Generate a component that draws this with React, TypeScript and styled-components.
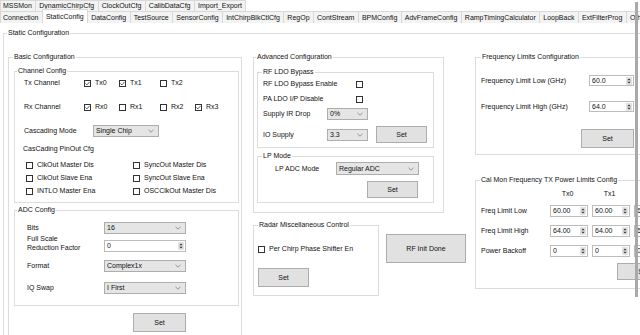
import React from "react";
import styled, { createGlobalStyle } from "styled-components";

const GlobalStyle = createGlobalStyle`
  html, body { margin: 0; padding: 0; background: #fff; }
  *, *::before, *::after { box-sizing: border-box; }
`;

const Screen = styled.div`
  position: relative;
  width: 640px;
  height: 335px;
  overflow: hidden;
  background: #fff;
  font-family: "Liberation Sans", Arial, sans-serif;
  font-size: 7px;
  line-height: 8px;
  color: #111;
`;

const TabStrip = styled.div`
  display: flex;
  flex-direction: column;
`;

const TabRow = styled.div<{ $h: number; $base?: boolean }>`
  display: flex;
  height: ${(p) => p.$h}px;
  white-space: nowrap;
  ${(p) => (p.$base ? "box-shadow: inset 0 -1px 0 #d9d9d9;" : "")}
`;

const Tab = styled.div<{ $sel?: boolean; $first?: boolean }>`
  flex: none;
  display: flex;
  align-items: center;
  padding: 0 3.5px 0 ${(p) => (p.$first ? 2 : 3)}px;
  margin-left: ${(p) => (p.$first ? 0 : -1)}px;
  border: 1px solid #d9d9d9;
  border-bottom: none;
  background: ${(p) => (p.$sel ? "#fff" : "#f3f3f3")};
  ${(p) =>
    p.$sel
      ? "margin-top: -2px; height: calc(100% + 2px); position: relative; z-index: 1;"
      : ""}
`;

const TabPage = styled.div`
  padding: 6px 0 0 3px;
`;

const GroupBox = styled.fieldset<{ $w: number; $h: number; $mt?: number; $mr?: number }>`
  flex: none;
  width: ${(p) => p.$w}px;
  height: ${(p) => p.$h}px;
  margin: ${(p) => p.$mt ?? 0}px ${(p) => p.$mr ?? 0}px 0 0;
  padding: 0;
  min-width: 0;
  border: 1px solid #dcdcdc;
`;

const Legend = styled.legend<{ $x: number }>`
  margin-left: ${(p) => p.$x}px;
  padding: 0 1px;
  font-size: 7px;
  line-height: 8px;
  white-space: nowrap;
`;

const GroupBody = styled.div<{ $pad: string; $row?: boolean }>`
  display: flex;
  flex-direction: ${(p) => (p.$row ? "row" : "column")};
  align-items: flex-start;
  padding: ${(p) => p.$pad};
`;

const Column = styled.div<{ $w: number; $mr?: number }>`
  flex: none;
  display: flex;
  flex-direction: column;
  align-items: flex-start;
  width: ${(p) => p.$w}px;
  margin-right: ${(p) => p.$mr ?? 0}px;
`;

const PairRow = styled.div<{ $mt?: number }>`
  display: flex;
  align-items: flex-start;
  margin-top: ${(p) => p.$mt ?? 0}px;
`;

const FormRow = styled.div<{ $h: number; $mt?: number; $ml?: number; $end?: boolean }>`
  flex: none;
  display: flex;
  align-items: ${(p) => (p.$end ? "flex-end" : "center")};
  height: ${(p) => p.$h}px;
  margin-top: ${(p) => p.$mt ?? 0}px;
  margin-left: ${(p) => p.$ml ?? 0}px;
  white-space: nowrap;
`;

const FieldLabel = styled.span<{ $w?: number; $lh?: number }>`
  flex: none;
  width: ${(p) => (p.$w ? `${p.$w}px` : "auto")};
  line-height: ${(p) => p.$lh ?? 8}px;
  white-space: nowrap;
`;

const CheckGrid = styled.div<{ $cols: string; $mt?: number; $ml?: number }>`
  display: grid;
  grid-template-columns: ${(p) => p.$cols};
  align-items: center;
  height: 10px;
  margin-top: ${(p) => p.$mt ?? 0}px;
  margin-left: ${(p) => p.$ml ?? 0}px;
  white-space: nowrap;
`;

const CheckItem = styled.span`
  display: flex;
  align-items: center;
  gap: 4px;
`;

const BoxMark = styled.span`
  flex: none;
  width: 7px;
  height: 7px;
  border: 1px solid #333;
  background: #fff;
  display: flex;
  align-items: center;
  justify-content: center;
`;

const Combo = styled.div<{ $w: number; $h: number; $ml?: number }>`
  flex: none;
  display: flex;
  align-items: center;
  justify-content: space-between;
  width: ${(p) => p.$w}px;
  height: ${(p) => p.$h}px;
  margin-left: ${(p) => p.$ml ?? 0}px;
  padding: 0 4px 0 2px;
  background: #e5e5e5;
  border: 1px solid #adadad;
`;

const SpinBox = styled.div<{ $w: number; $h: number }>`
  flex: none;
  display: flex;
  align-items: center;
  justify-content: space-between;
  width: ${(p) => p.$w}px;
  height: ${(p) => p.$h}px;
  padding: 0 1px 0 2px;
  background: #fff;
  border: 1px solid #bcbcbc;
`;

const PushButton = styled.button<{ $w: number; $h: number; $mt?: number; $ml?: number }>`
  flex: none;
  display: flex;
  align-items: center;
  justify-content: center;
  width: ${(p) => p.$w}px;
  height: ${(p) => p.$h}px;
  margin: ${(p) => p.$mt ?? 0}px 0 0 ${(p) => p.$ml ?? 0}px;
  padding: 0;
  font: inherit;
  color: #111;
  background: #e1e1e1;
  border: 1px solid #adadad;
  border-radius: 0;
`;

const LimitGrid = styled.div`
  display: grid;
  grid-template-columns: 65px 38px 38px 38px;
  grid-auto-rows: 12px;
  grid-template-rows: 7px;
  column-gap: 4px;
  row-gap: 8px;
  align-items: center;
  white-space: nowrap;
`;

const ColHead = styled.span`
  text-align: center;
  padding-right: 3px;
`;

const ScrollEdge = styled.div`
  position: absolute;
  left: 635px;
  top: 2px;
  width: 3px;
  height: 295px;
  background: #a9a9a9;
`;

function Check({ on }: { on?: boolean }) {
  return (
    <BoxMark>
      {on && (
        <svg width="5" height="5" viewBox="0 0 5 5">
          <polyline points="0.4,2.4 1.9,3.9 4.6,0.9" fill="none" stroke="#333" strokeWidth="0.8" />
        </svg>
      )}
    </BoxMark>
  );
}

function CheckOpt({ on, label }: { on?: boolean; label: string }) {
  return (
    <CheckItem>
      <Check on={on} />
      <span>{label}</span>
    </CheckItem>
  );
}

function Drop({ w, h, value, ml }: { w: number; h: number; value: string; ml?: number }) {
  return (
    <Combo $w={w} $h={h} $ml={ml}>
      <span>{value}</span>
      <svg width="6" height="4" viewBox="0 0 6 4">
        <polyline points="0.5,0.8 3,3.2 5.5,0.8" fill="none" stroke="#7d7d7d" strokeWidth="0.8" />
      </svg>
    </Combo>
  );
}

function Spin({ w, h, value }: { w: number; h: number; value: string }) {
  return (
    <SpinBox $w={w} $h={h}>
      <span>{value}</span>
      <svg width="6" height="8" viewBox="0 0 6 8">
        <rect x="0" y="0" width="6" height="8" fill="#e2e2e2" />
        <polygon points="1.3,3.2 3,1.5 4.7,3.2" fill="#333" />
        <polygon points="1.3,4.8 3,6.5 4.7,4.8" fill="#333" />
      </svg>
    </SpinBox>
  );
}

const row1 = ["MSSMon", "DynamicChirpCfg", "ClockOutCfg", "CalibDataCfg", "Import_Export"];
const row2 = [
  "Connection",
  "StaticConfig",
  "DataConfig",
  "TestSource",
  "SensorConfig",
  "IntChirpBlkCtlCfg",
  "RegOp",
  "ContStream",
  "BPMConfig",
  "AdvFrameConfig",
  "RampTimingCalculator",
  "LoopBack",
  "ExtFilterProg",
  "OtherCfg",
];

const limitRows = [
  { label: "Freq Limit Low", values: ["60.00", "60.00", "60.00"] },
  { label: "Freq Limit High", values: ["64.00", "64.00", "64.00"] },
  { label: "Power Backoff", values: ["0", "0", "0"] },
];

export default function App() {
  return (
    <Screen>
      <GlobalStyle />
      <TabStrip>
        <TabRow $h={11}>
          {row1.map((t, i) => (
            <Tab key={t} $first={i === 0}>
              {t}
            </Tab>
          ))}
        </TabRow>
        <TabRow $h={12} $base>
          {row2.map((t, i) => (
            <Tab key={t} $first={i === 0} $sel={t === "StaticConfig"}>
              {t}
            </Tab>
          ))}
        </TabRow>
      </TabStrip>

      <TabPage>
        <GroupBox $w={720} $h={330}>
          <Legend $x={3}>Static Configuration</Legend>
          <GroupBody $pad="16px 0 0 4px" $row>
            {/* Basic configuration */}
            <GroupBox $w={234} $h={290} $mr={11}>
              <Legend $x={4}>Basic Configuration</Legend>
              <GroupBody $pad="6px 0 0 5px">
                <GroupBox $w={225} $h={136}>
                  <Legend $x={2}>Channel Config</Legend>
                  <GroupBody $pad="3px 0 0 9px">
                    <CheckGrid $cols="60px 35px 41px 35px">
                      <span>Tx Channel</span>
                      <CheckOpt on label="Tx0" />
                      <CheckOpt on label="Tx1" />
                      <CheckOpt label="Tx2" />
                    </CheckGrid>
                    <CheckGrid $cols="60px 35px 41px 35px auto" $mt={14}>
                      <span>Rx Channel</span>
                      <CheckOpt on label="Rx0" />
                      <CheckOpt label="Rx1" />
                      <CheckOpt label="Rx2" />
                      <CheckOpt on label="Rx3" />
                    </CheckGrid>
                    <FormRow $h={12} $mt={13}>
                      <FieldLabel $w={69}>Cascading Mode</FieldLabel>
                      <Drop w={66} h={12} value="Single Chip" />
                    </FormRow>
                    <FormRow $h={10} $mt={7} $ml={-1}>
                      <FieldLabel>CasCading PinOut Cfg</FieldLabel>
                    </FormRow>
                    <CheckGrid $cols="107px auto" $mt={6} $ml={2}>
                      <CheckOpt label="ClkOut Master Dis" />
                      <CheckOpt label="SyncOut Master Dis" />
                    </CheckGrid>
                    <CheckGrid $cols="107px auto" $mt={3} $ml={2}>
                      <CheckOpt label="ClkOut Slave Ena" />
                      <CheckOpt label="SyncOut Slave Ena" />
                    </CheckGrid>
                    <CheckGrid $cols="107px auto" $mt={3} $ml={2}>
                      <CheckOpt label="INTLO Master Ena" />
                      <CheckOpt label="OSCClkOut Master Dis" />
                    </CheckGrid>
                  </GroupBody>
                </GroupBox>

                <GroupBox $w={225} $h={100} $mt={3}>
                  <Legend $x={2}>ADC Config</Legend>
                  <GroupBody $pad="8px 0 0 12px">
                    <FormRow $h={12}>
                      <FieldLabel $w={77}>Bits</FieldLabel>
                      <Drop w={82} h={12} value="16" />
                    </FormRow>
                    <FormRow $h={18} $end>
                      <FieldLabel $w={77} $lh={9}>
                        Full Scale
                        <br />
                        Reduction Factor
                      </FieldLabel>
                      <Spin w={82} h={12} value="0" />
                    </FormRow>
                    <FormRow $h={12} $mt={8}>
                      <FieldLabel $w={77}>Format</FieldLabel>
                      <Drop w={82} h={12} value="Complex1x" />
                    </FormRow>
                    <FormRow $h={12} $mt={10}>
                      <FieldLabel $w={77}>IQ Swap</FieldLabel>
                      <Drop w={82} h={12} value="I First" />
                    </FormRow>
                  </GroupBody>
                </GroupBox>

                <PushButton $w={53} $h={19} $mt={7} $ml={119}>
                  Set
                </PushButton>
              </GroupBody>
            </GroupBox>

            {/* Advanced column */}
            <Column $w={212} $mr={10}>
              <GroupBox $w={191} $h={160}>
                <Legend $x={2}>Advanced Configuration</Legend>
                <GroupBody $pad="7px 0 0 3px">
                  <GroupBox $w={177} $h={80}>
                    <Legend $x={4}>RF LDO Bypass</Legend>
                    <GroupBody $pad="3px 0 0 5px">
                      <FormRow $h={10}>
                        <FieldLabel $w={93}>RF LDO Bypass Enable</FieldLabel>
                        <Check />
                      </FormRow>
                      <FormRow $h={10} $mt={5}>
                        <FieldLabel $w={93}>PA LDO I/P Disable</FieldLabel>
                        <Check />
                      </FormRow>
                      <FormRow $h={12} $mt={4}>
                        <FieldLabel $w={64}>Supply IR Drop</FieldLabel>
                        <Drop w={41} h={12} value="0%" />
                      </FormRow>
                      <FormRow $h={17} $mt={6}>
                        <FieldLabel $w={64}>IO Supply</FieldLabel>
                        <Drop w={41} h={12} value="3.3" />
                        <PushButton $w={51} $h={17} $ml={8}>
                          Set
                        </PushButton>
                      </FormRow>
                    </GroupBody>
                  </GroupBox>
                  <GroupBox $w={177} $h={51} $mt={4}>
                    <Legend $x={4}>LP Mode</Legend>
                    <GroupBody $pad="2px 0 0 17px">
                      <FormRow $h={13}>
                        <FieldLabel $w={61}>LP ADC Mode</FieldLabel>
                        <Drop w={83} h={13} value="Regular ADC" />
                      </FormRow>
                      <PushButton $w={51} $h={17} $mt={6} $ml={92}>
                        Set
                      </PushButton>
                    </GroupBody>
                  </GroupBox>
                </GroupBody>
              </GroupBox>

              <PairRow $mt={8}>
                <GroupBox $w={126} $h={75}>
                  <Legend $x={4}>Radar Miscellaneous Control</Legend>
                  <GroupBody $pad="15px 0 0 4px">
                    <FormRow $h={10}>
                      <CheckOpt label="Per Chirp Phase Shifter En" />
                    </FormRow>
                    <PushButton $w={51} $h={19} $mt={14}>
                      Set
                    </PushButton>
                  </GroupBody>
                </GroupBox>
                <PushButton $w={80} $h={29} $mt={13} $ml={7}>
                  RF Init Done
                </PushButton>
              </PairRow>
            </Column>

            {/* Frequency column */}
            <Column $w={200}>
              <GroupBox $w={200} $h={102}>
                <Legend $x={5}>Frequency Limits Configuration</Legend>
                <GroupBody $pad="14px 0 0 5px">
                  <FormRow $h={11}>
                    <FieldLabel $w={108}>Frequency Limit Low (GHz)</FieldLabel>
                    <Spin w={45} h={11} value="60.0" />
                  </FormRow>
                  <FormRow $h={11} $mt={15}>
                    <FieldLabel $w={108}>Frequency Limit High (GHz)</FieldLabel>
                    <Spin w={45} h={11} value="64.0" />
                  </FormRow>
                  <PushButton $w={53} $h={19} $mt={17} $ml={100}>
                    Set
                  </PushButton>
                </GroupBody>
              </GroupBox>

              <GroupBox $w={200} $h={113} $mt={21}>
                <Legend $x={4}>Cal Mon Frequency TX Power Limits Config</Legend>
                <GroupBody $pad="6px 0 0 5px">
                  <LimitGrid>
                    <span />
                    <ColHead>Tx0</ColHead>
                    <ColHead>Tx1</ColHead>
                    <ColHead>Tx2</ColHead>
                    {limitRows.map((r) => (
                      <React.Fragment key={r.label}>
                        <span>{r.label}</span>
                        {r.values.map((v, i) => (
                          <Spin key={i} w={38} h={12} value={v} />
                        ))}
                      </React.Fragment>
                    ))}
                  </LimitGrid>
                  <PushButton $w={53} $h={17} $mt={6} $ml={136}>
                    Set
                  </PushButton>
                </GroupBody>
              </GroupBox>
            </Column>
          </GroupBody>
        </GroupBox>
      </TabPage>
      <ScrollEdge />
    </Screen>
  );
}
